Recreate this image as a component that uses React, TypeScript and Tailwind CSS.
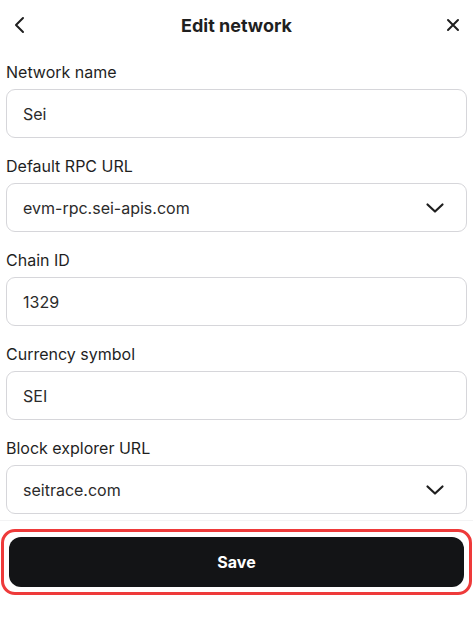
import React from "react";

function ChevronDown() {
  return (
    <svg width="20" height="12" viewBox="0 0 20 12" fill="none" stroke="#1f1f1f" strokeWidth="2.2" strokeLinecap="round" strokeLinejoin="round">
      <path d="M2.5 2.5l7.5 7 7.5-7" />
    </svg>
  );
}

function Field({ label, value, select }: { label: string; value: string; select?: boolean }) {
  return (
    <div className="flex flex-col">
      <div className="text-[16px] leading-[22px] text-[#1f1f1f] mb-[6px]">{label}</div>
      <div className="h-[49px] rounded-[9px] border border-[#d6d6da] bg-white flex items-center pl-[16px] pr-[21px]">
        <span className="flex-1 text-[16px] text-[#2b2b2b]">{value}</span>
        {select && <ChevronDown />}
      </div>
    </div>
  );
}

export default function App() {
  return (
    <div className="w-[473px] h-[617px] bg-white flex flex-col" style={{ fontFamily: "Inter, 'Noto Sans', sans-serif" }}>
      <div className="h-[50px] flex items-center justify-between px-[12px]">
        <svg width="16" height="18" viewBox="0 0 16 18" fill="none" stroke="#1f1f1f" strokeWidth="2" strokeLinecap="round" strokeLinejoin="round">
          <path d="M11 2L4 9l7 7" />
        </svg>
        <div className="text-[18px] font-bold text-[#1f1f1f]">Edit network</div>
        <svg width="16" height="16" viewBox="0 0 16 16" fill="none" stroke="#1f1f1f" strokeWidth="2" strokeLinecap="round">
          <path d="M3 3l10 10M13 3L3 13" />
        </svg>
      </div>
      <div className="flex flex-col gap-[17px] px-[6px] pt-[11px]">
        <Field label="Network name" value="Sei" />
        <Field label="Default RPC URL" value="evm-rpc.sei-apis.com" select />
        <Field label="Chain ID" value="1329" />
        <Field label="Currency symbol" value="SEI" />
        <Field label="Block explorer URL" value="seitrace.com" select />
      </div>
      <div className="mt-[6px] border-t border-[#f3f3f4] pt-[8px] px-[1px]">
        <div className="rounded-[14px] border-[3px] border-[#ee3a3a] p-[5px]">
          <div className="h-[50px] rounded-[12px] bg-[#131416] flex items-center justify-center text-white text-[16px] font-bold">
            Save
          </div>
        </div>
      </div>
    </div>
  );
}
